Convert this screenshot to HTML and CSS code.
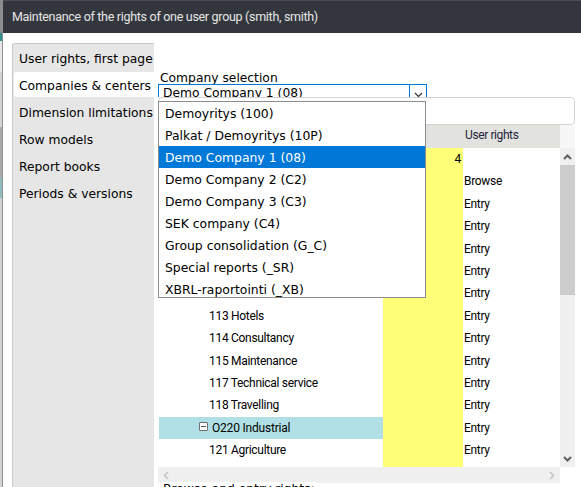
FILE: index.html
```html
<!DOCTYPE html>
<html>
<head>
<meta charset="utf-8">
<link rel="stylesheet" href="styles.css">
</head>
<body>
<div class="app">
  <div class="edge"></div>
  <div class="window">
    <div class="titlebar">Maintenance of the rights of one user group (smith, smith)</div>
    <div class="dialog">
      <nav class="tabs">
        <div class="tab">User rights, first page</div>
        <div class="tab active">Companies &amp; centers</div>
        <div class="tab">Dimension limitations</div>
        <div class="tab">Row models</div>
        <div class="tab">Report books</div>
        <div class="tab">Periods &amp; versions</div>
      </nav>
      <main class="content">
        <div class="field-label">Company selection</div>
        <div class="combo">
          <div class="select">
            <span class="select-text">Demo Company 1 (08)</span>
            <span class="select-btn"><svg width="9" height="6" viewBox="0 0 9 6"><path d="M1 1 L4.5 4.5 L8 1" fill="none" stroke="#333" stroke-width="1.2"/></svg></span>
          </div>
          <ul class="listbox">
            <li>Demoyritys (100)</li>
            <li>Palkat / Demoyritys (10P)</li>
            <li class="selected">Demo Company 1 (08)</li>
            <li>Demo Company 2 (C2)</li>
            <li>Demo Company 3 (C3)</li>
            <li>SEK company (C4)</li>
            <li>Group consolidation (G_C)</li>
            <li>Special reports (_SR)</li>
            <li>XBRL-raportointi (_XB)</li>
          </ul>
        </div>
        <div class="filter"></div>
        <div class="grid">
          <div class="grid-main">
            <div class="table">
              <div class="thead">
                <div class="th c-tree"></div>
                <div class="th c-val"></div>
                <div class="th c-rights">User rights</div>
              </div>
              <div class="tbody">
                <div class="row"><div class="td c-tree"></div><div class="td c-val">4</div><div class="td c-rights"></div></div>
                <div class="row"><div class="td c-tree"></div><div class="td c-val"></div><div class="td c-rights">Browse</div></div>
                <div class="row"><div class="td c-tree"></div><div class="td c-val"></div><div class="td c-rights">Entry</div></div>
                <div class="row"><div class="td c-tree"></div><div class="td c-val"></div><div class="td c-rights">Entry</div></div>
                <div class="row"><div class="td c-tree"></div><div class="td c-val"></div><div class="td c-rights">Entry</div></div>
                <div class="row"><div class="td c-tree"></div><div class="td c-val"></div><div class="td c-rights">Entry</div></div>
                <div class="row"><div class="td c-tree"></div><div class="td c-val"></div><div class="td c-rights">Entry</div></div>
                <div class="row"><div class="td c-tree leaf">113 Hotels</div><div class="td c-val"></div><div class="td c-rights">Entry</div></div>
                <div class="row"><div class="td c-tree leaf">114 Consultancy</div><div class="td c-val"></div><div class="td c-rights">Entry</div></div>
                <div class="row"><div class="td c-tree leaf">115 Maintenance</div><div class="td c-val"></div><div class="td c-rights">Entry</div></div>
                <div class="row"><div class="td c-tree leaf">117 Technical service</div><div class="td c-val"></div><div class="td c-rights">Entry</div></div>
                <div class="row"><div class="td c-tree leaf">118 Travelling</div><div class="td c-val"></div><div class="td c-rights">Entry</div></div>
                <div class="row"><div class="td c-tree node hl"><span class="minus"></span>O220 Industrial</div><div class="td c-val"></div><div class="td c-rights">Entry</div></div>
                <div class="row"><div class="td c-tree leaf">121 Agriculture</div><div class="td c-val"></div><div class="td c-rights">Entry</div></div>
                <div class="row"><div class="td c-tree"></div><div class="td c-val"></div><div class="td c-rights"></div></div>
              </div>
            </div>
            <div class="vscroll">
              <div class="vs-corner"></div>
              <div class="vs-btn"><svg width="9" height="6" viewBox="0 0 9 6"><path d="M1 5 L4.5 1.5 L8 5" fill="none" stroke="#606060" stroke-width="2"/></svg></div>
              <div class="vs-thumb"></div>
              <div class="vs-track"></div>
              <div class="vs-btn"><svg width="9" height="6" viewBox="0 0 9 6"><path d="M1 1 L4.5 4.5 L8 1" fill="none" stroke="#606060" stroke-width="2"/></svg></div>
            </div>
          </div>
          <div class="hs-row">
            <div class="hscroll">
              <svg width="6" height="9" viewBox="0 0 6 9"><path d="M5 1 L1.5 4.5 L5 8" fill="none" stroke="#c4c4c4" stroke-width="1.6"/></svg>
              <svg width="6" height="9" viewBox="0 0 6 9"><path d="M1 1 L4.5 4.5 L1 8" fill="none" stroke="#c4c4c4" stroke-width="1.6"/></svg>
            </div>
            <div class="hs-corner"></div>
          </div>
        </div>
        <div class="legend"><span class="legend-text">Browse and entry rights:</span></div>
      </main>
    </div>
  </div>
</div>
</body>
</html>
```

FILE: styles.css
```css
* { box-sizing: border-box; }
html, body {
  margin: 0;
  padding: 0;
  width: 581px;
  height: 487px;
  overflow: hidden;
  background: #ffffff;
}
.app {
  display: flex;
  width: 581px;
  height: 487px;
}
.edge {
  width: 3px;
  flex: none;
  background:
    linear-gradient(to right, transparent 0 2px, #8e9094 2px 3px),
    linear-gradient(to bottom, #8a8c90 0 33px, #2d8f8c 33px 41px, #e6e6e6 41px 72px, #d4d4d4 72px 127px, #a9a9a9 127px 178px, #8fbdbd 178px 198px, #d2d2d2 198px 100%);
}
.window {
  flex: 1;
  display: flex;
  flex-direction: column;
  min-width: 0;
}
.titlebar {
  height: 33px;
  flex: none;
  background: #33373d;
  border-top: 1px solid #4a4e54;
  color: #e6e6e6;
  font-family: Roboto, "Open Sans", sans-serif;
  font-size: 12.5px;
  letter-spacing: -0.3px;
  line-height: 30px;
  padding: 1px 0 0 9px;
  white-space: nowrap;
}
.dialog {
  flex: 1;
  display: flex;
  padding: 10px 0 0 9px;
  min-height: 0;
}
.tabs {
  width: 142px;
  flex: none;
  background: #e6e6e6;
  border-left: 1px solid #c9c9c9;
  border-top: 1px solid #c9c9c9;
  border-top-left-radius: 3px;
  font-family: "DejaVu Sans", Verdana, sans-serif;
  font-size: 12.3px;
  color: #000;
  overflow: hidden;
}
.tab {
  height: 27px;
  line-height: 27px;
  padding-top: 2px;
  padding-left: 5px;
  margin-left: 1px;
  white-space: nowrap;
}
.tab.active {
  background: #ffffff;
  height: 25px;
  line-height: 25px;
  padding-top: 2px;
  margin-top: 1px;
  margin-bottom: 1px;
  border-radius: 2px 0 0 2px;
}
.content {
  flex: 1;
  min-width: 0;
  padding-left: 4px;
  display: flex;
  flex-direction: column;
  font-family: "DejaVu Sans", Verdana, sans-serif;
  font-size: 12.3px;
  color: #000;
}
.field-label {
  margin-top: 27px;
  line-height: 14px;
  padding-top: 1px;
  height: 14px;
  padding-left: 2px;
  white-space: nowrap;
}
.combo {
  position: relative;
  width: 269px;
  z-index: 2;
}
.select {
  height: 13px;
  border: 1px solid #0078d7;
  border-bottom: none;
  overflow: hidden;
  display: flex;
}
.select-text {
  flex: 1;
  padding-left: 4px;
  line-height: 16px;
  white-space: nowrap;
}
.select-btn {
  width: 17px;
  border-left: 1px solid #0078d7;
  display: flex;
  justify-content: center;
  padding-top: 7px;
}
.listbox {
  position: absolute;
  top: 17px;
  left: 0;
  width: 268px;
  height: 197px;
  margin: 0;
  padding: 0;
  list-style: none;
  background: #fff;
  border: 1px solid #8d8d8d;
  overflow: hidden;
  font-size: 12.4px;
}
.listbox li {
  height: 22px;
  line-height: 22px;
  padding-top: 1px;
  padding-left: 6px;
  white-space: nowrap;
}
.listbox li.selected {
  background: #0078d7;
  color: #fff;
}
.filter {
  height: 28px;
  margin-right: 6px;
  border: 1px solid #d3d3d3;
  border-radius: 4px;
  background: #fff;
  flex: none;
}
.grid {
  width: 417px;
  flex: none;
  display: flex;
  flex-direction: column;
}
.grid-main {
  display: flex;
  height: 342px;
}
.table {
  width: 402px;
  display: flex;
  flex-direction: column;
  overflow: hidden;
  font-family: Roboto, "Liberation Sans", sans-serif;
  font-size: 12px;
  letter-spacing: -0.3px;
  color: #000;
}
.thead {
  display: flex;
  height: 23px;
  flex: none;
  background: #e2e2df;
}
.th {
  line-height: 21px;
  white-space: nowrap;
}
.thead .c-rights {
  color: #1f1f3d;
  padding-left: 2px;
  letter-spacing: -0.4px;
}
.tbody {
  flex: 1;
  overflow: hidden;
}
.row {
  display: flex;
  height: 22.4px;
}
.c-tree { width: 225px; flex: none; }
.c-val { width: 80px; flex: none; }
.c-rights { width: 97px; flex: none; }
.td {
  line-height: 22.4px;
  white-space: nowrap;
}
.tbody .c-val {
  background: #ffff78;
  text-align: right;
  padding-right: 2px;
}
.tbody .c-rights {
  padding-left: 1px;
}
.leaf {
  padding-left: 51px;
}
.node {
  display: flex;
  align-items: center;
  padding-left: 40px;
  letter-spacing: -0.2px;
}
.hl {
  background: #b0e0e6;
  margin-left: 1px;
  width: 224px;
}
.minus {
  width: 9px;
  height: 9px;
  border: 1px solid #6e6e6e;
  border-radius: 1px;
  background: linear-gradient(#555, #555) center / 5px 1px no-repeat, #fdfdfd;
  margin-right: 4px;
  margin-top: -2px;
}
.vscroll {
  width: 15px;
  flex: none;
  display: flex;
  flex-direction: column;
  background: #f0f0f0;
}
.vs-corner {
  height: 23px;
  background: #f7f7f7;
}
.vs-btn {
  height: 17px;
  display: flex;
  align-items: center;
  justify-content: center;
}
.vs-thumb {
  height: 130px;
  background: #cdcdcd;
}
.vs-track { flex: 1; }
.hs-row {
  display: flex;
  height: 16px;
}
.hscroll {
  width: 402px;
  background: #f0f0f0;
  display: flex;
  align-items: center;
  justify-content: space-between;
  padding: 0 5px 0 5px;
}
.hs-corner {
  width: 15px;
  background: #fff;
}
.legend {
  margin-top: -1px;
  padding-left: 4px;
  line-height: 15px;
}
.legend-text {
  background: #fff;
  padding: 0 1px;
  white-space: nowrap;
}
```
